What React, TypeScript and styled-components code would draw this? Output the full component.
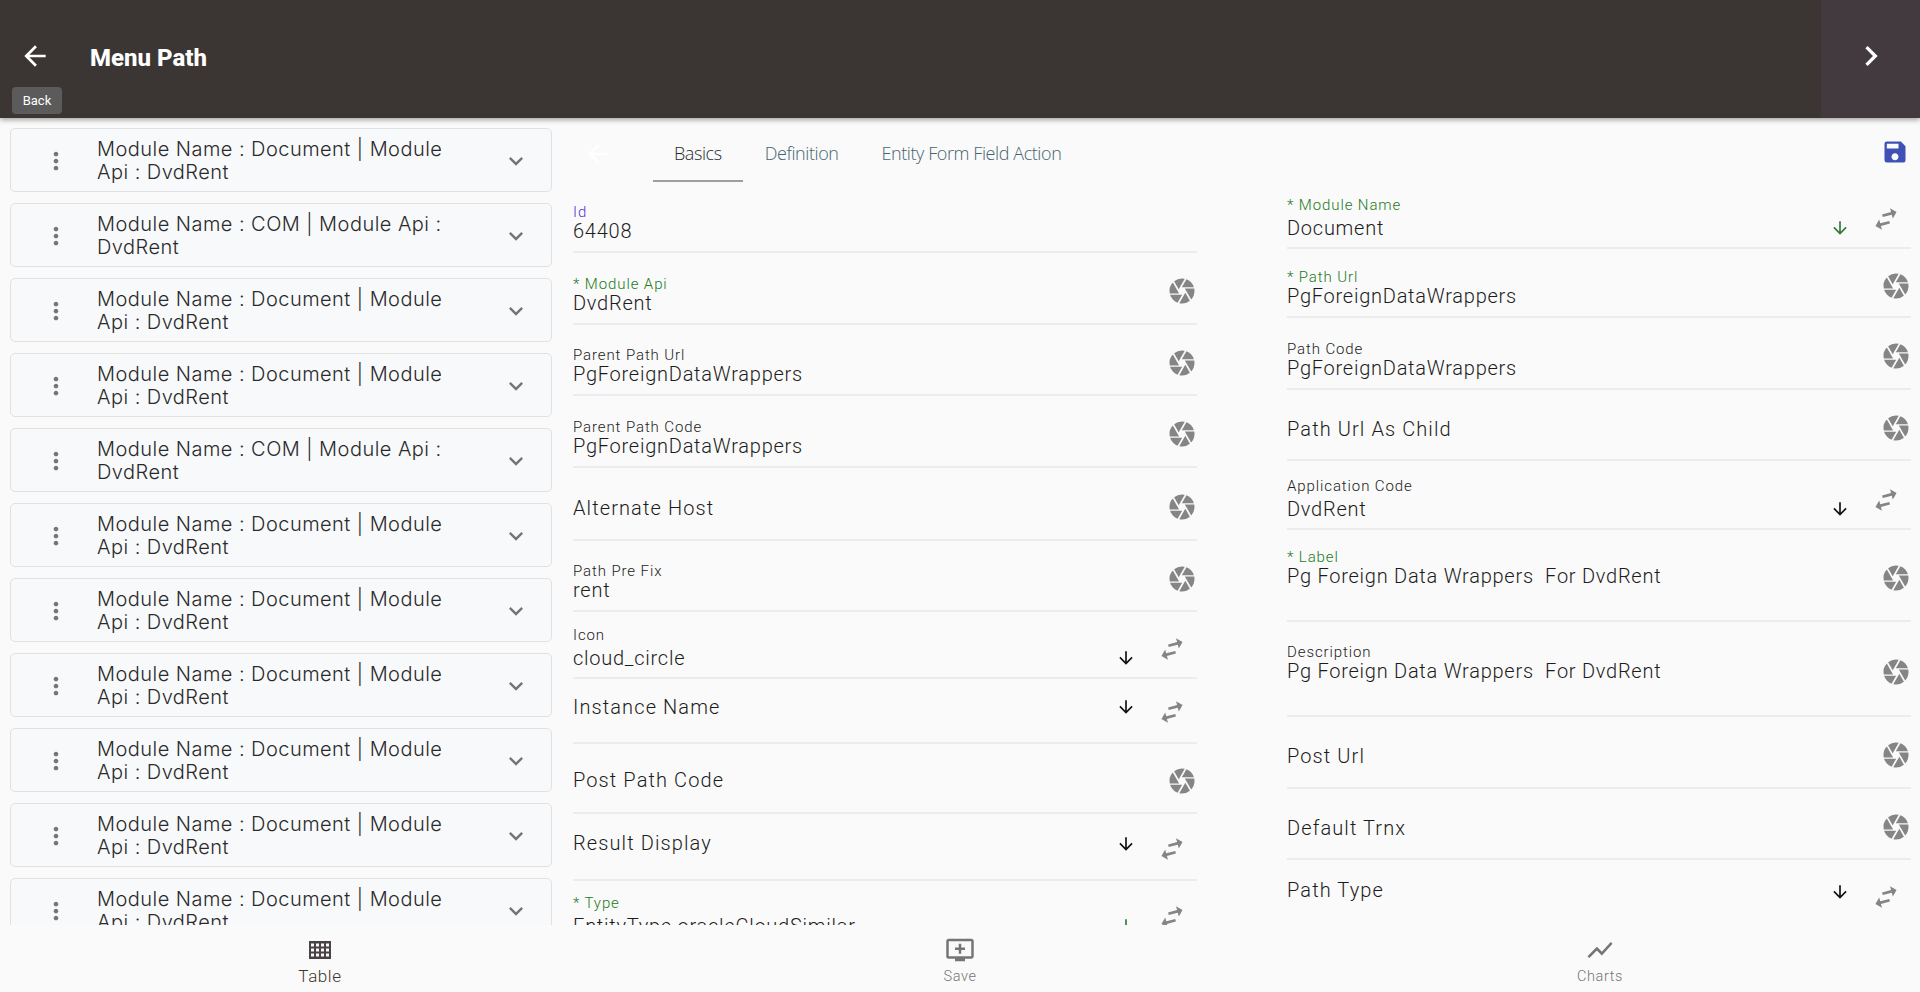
import styled, { createGlobalStyle } from "styled-components";
import {
  MdAddToQueue,
  MdArrowBack,
  MdArrowDownward,
  MdCamera,
  MdChevronRight,
  MdExpandMore,
  MdMoreVert,
  MdSave,
  MdShowChart,
  MdSwapHoriz,
} from "react-icons/md";

type Action = "camera" | "pick";
type Tone = "plain" | "id" | "required";

interface FieldData {
  label: string;
  value?: string;
  tone?: Tone;
  action: Action | "none";
  height: number;
  tall?: boolean;
  offset?: number;
}

const listItems = [
  "Module Name : Document | Module Api : DvdRent",
  "Module Name : COM | Module Api : DvdRent",
  "Module Name : Document | Module Api : DvdRent",
  "Module Name : Document | Module Api : DvdRent",
  "Module Name : COM | Module Api : DvdRent",
  "Module Name : Document | Module Api : DvdRent",
  "Module Name : Document | Module Api : DvdRent",
  "Module Name : Document | Module Api : DvdRent",
  "Module Name : Document | Module Api : DvdRent",
  "Module Name : Document | Module Api : DvdRent",
  "Module Name : Document | Module Api : DvdRent",
];

const leftFields: FieldData[] = [
  { label: "Id", value: "64408", tone: "id", action: "none", height: 63 },
  { label: "* Module Api", value: "DvdRent", tone: "required", action: "camera", height: 72 },
  { label: "Parent Path Url", value: "PgForeignDataWrappers", action: "camera", height: 71 },
  { label: "Parent Path Code", value: "PgForeignDataWrappers", action: "camera", height: 72 },
  { label: "Alternate Host", action: "camera", height: 73 },
  { label: "Path Pre Fix", value: "rent", action: "camera", height: 71 },
  { label: "Icon", value: "cloud_circle", action: "pick", height: 67 },
  { label: "Instance Name", action: "pick", height: 65 },
  { label: "Post Path Code", action: "camera", height: 70, offset: 2 },
  { label: "Result Display", action: "pick", height: 67 },
  { label: "* Type", value: "EntityType.oracleCloudSimilar", tone: "required", action: "pick", height: 66 },
];

const rightFields: FieldData[] = [
  { label: "* Module Name", value: "Document", tone: "required", action: "pick", height: 59 },
  { label: "* Path Url", value: "PgForeignDataWrappers", tone: "required", action: "camera", height: 69 },
  { label: "Path Code", value: "PgForeignDataWrappers", action: "camera", height: 72 },
  { label: "Path Url As Child", action: "camera", height: 71 },
  { label: "Application Code", value: "DvdRent", action: "pick", height: 69 },
  { label: "* Label", value: "Pg Foreign Data Wrappers  For DvdRent", tone: "required", action: "camera", height: 92, tall: true },
  { label: "Description", value: "Pg Foreign Data Wrappers  For DvdRent", action: "camera", height: 95, tall: true },
  { label: "Post Url", action: "camera", height: 72 },
  { label: "Default Trnx", action: "camera", height: 71 },
  { label: "Path Type", action: "pick", height: 69 },
];

const GlobalStyle = createGlobalStyle`
  html, body, #root {
    height: 100%;
    margin: 0;
  }
  body {
    overflow: hidden;
    background: #fafafa;
    font-family: Roboto, "Noto Sans", sans-serif;
  }
  svg {
    display: block;
  }
`;

const Page = styled.div`
  display: flex;
  flex-direction: column;
  height: 992px;
`;

const Header = styled.header`
  position: relative;
  z-index: 2;
  flex: 0 0 118px;
  display: flex;
  align-items: center;
  background: #3b3633;
  box-shadow: 0 2px 5px rgba(0, 0, 0, 0.35);
  color: #fff;
`;

const BackButton = styled.div`
  flex: 0 0 70px;
  display: flex;
  justify-content: center;
  font-size: 32px;
  padding-bottom: 6px;
`;

const Tooltip = styled.div`
  position: absolute;
  left: 12px;
  top: 87px;
  width: 50px;
  height: 27px;
  display: flex;
  align-items: center;
  justify-content: center;
  border-radius: 4px;
  background: #5b5b5b;
  font-size: 13px;
`;

const Title = styled.h1`
  flex: 1;
  margin: 0 0 0 20px;
  padding-bottom: 2px;
  font-size: 24px;
  font-weight: 800;
`;

const NextButton = styled.div`
  align-self: stretch;
  flex: 0 0 99px;
  display: flex;
  align-items: center;
  justify-content: center;
  background: #423a3f;
  font-size: 40px;
  padding-bottom: 6px;
  box-sizing: border-box;
`;

const Main = styled.main`
  flex: 1;
  min-height: 0;
  display: flex;
  overflow: hidden;
`;

const ListColumn = styled.div`
  flex: 0 0 552px;
  display: flex;
  flex-direction: column;
  gap: 11px;
  padding: 10px 0 0 10px;
  box-sizing: border-box;
`;

const ListCard = styled.div`
  flex: 0 0 64px;
  box-sizing: border-box;
  display: flex;
  align-items: center;
  border: 1px solid #dfe1e3;
  border-radius: 5px;
  background: #f8f9fb;
`;

const CardMenu = styled.div`
  flex: 0 0 86px;
  display: flex;
  justify-content: center;
  color: #757575;
  font-size: 28px;
  padding: 2px 0 0 4px;
  box-sizing: border-box;
`;

const CardText = styled.div`
  flex: 1;
  font-family: Inter, sans-serif;
  font-size: 20px;
  font-weight: 300;
  line-height: 23px;
  letter-spacing: 0.46px;
  color: #2a2a2a;
  padding: 1px 20px 0 0;
`;

const CardChevron = styled.div`
  flex: 0 0 70px;
  display: flex;
  justify-content: center;
  color: #757575;
  font-size: 28px;
  padding-top: 2px;
`;

const FormPanel = styled.div`
  flex: 1;
  min-width: 0;
  display: flex;
  flex-direction: column;
  padding-left: 21px;
`;

const TabBar = styled.div`
  flex: 0 0 72px;
  display: flex;
  align-items: flex-start;
  padding-right: 11px;
`;

const TabBack = styled.div`
  flex: 0 0 80px;
  box-sizing: border-box;
  padding: 21px 0 0 10px;
  color: #fff;
  font-size: 30px;
`;

const Tab = styled.div<{ $active?: boolean }>`
  box-sizing: border-box;
  height: 64px;
  padding: 23px 21px 0;
  margin-right: 1px;
  border-bottom: 2px solid ${({ $active }) => ($active ? "#9e9e9e" : "transparent")};
  font-family: "Open Sans", sans-serif;
  font-size: 18px;
  font-weight: 300;
  letter-spacing: -0.42px;
  color: ${({ $active }) => ($active ? "#1f2a30" : "#46646f")};
`;

const SaveAction = styled.div`
  margin-left: auto;
  padding-top: 20px;
  color: #3f51b5;
  font-size: 28px;
`;

const Columns = styled.div`
  display: grid;
  grid-template-columns: 624px 624px;
  column-gap: 90px;
`;

const FieldColumn = styled.div`
  display: flex;
  flex-direction: column;
`;

const FieldRow = styled.div<{ $height: number }>`
  box-sizing: border-box;
  flex: 0 0 ${({ $height }) => $height}px;
  display: flex;
  align-items: center;
  border-bottom: 2px solid #e9edf0;
`;

const FieldBody = styled.div<{ $picker?: boolean }>`
  flex: 1;
  min-width: 0;
  align-self: flex-end;
  padding-bottom: ${({ $picker }) => ($picker ? 8 : 9)}px;
`;

const FieldEmpty = styled.div<{ $shift: number }>`
  flex: 1;
  font-size: 20px;
  font-weight: 300;
  letter-spacing: 1.1px;
  color: #1c1c1c;
  transform: translateY(${({ $shift }) => $shift}px);
`;

const FieldLabel = styled.div<{ $tone: Tone }>`
  font-size: 15px;
  font-weight: 300;
  line-height: 16px;
  letter-spacing: 0.9px;
  color: ${({ $tone }) =>
    $tone === "id" ? "#5e2fd0" : $tone === "required" ? "#1b7a22" : "#222"};
`;

const FieldValue = styled.div<{ $tall?: boolean; $picker?: boolean }>`
  font-size: 20px;
  font-weight: 300;
  line-height: 22px;
  letter-spacing: 0.75px;
  white-space: pre;
  color: #1c1c1c;
  margin-top: ${({ $picker }) => ($picker ? 4 : 0)}px;
  margin-bottom: ${({ $tall }) => ($tall ? 24 : 0)}px;
`;

const CameraAction = styled.div`
  flex: 0 0 30px;
  color: #858585;
  font-size: 30px;
  transform: translateY(3px);
`;

const PickerActions = styled.div`
  flex: 0 0 81px;
  align-self: flex-end;
  display: flex;
  align-items: flex-end;
`;

const DownArrow = styled.div<{ $required?: boolean; $filled: boolean }>`
  flex: 0 0 40px;
  margin-bottom: ${({ $filled }) => ($filled ? 9 : 25)}px;
  color: ${({ $required }) => ($required ? "#2e7d32" : "#111")};
  font-size: 20px;
`;

const SwapArrow = styled.div<{ $filled: boolean }>`
  margin-bottom: ${({ $filled }) => ($filled ? 12 : 14)}px;
  color: #858585;
  font-size: 32px;
  transform: rotate(-15deg);
`;

const BottomBar = styled.nav`
  position: relative;
  z-index: 2;
  flex: 0 0 67px;
  display: grid;
  grid-template-columns: repeat(3, 1fr);
  background: #fafafa;
`;

const BottomItem = styled.div<{ $active?: boolean }>`
  display: flex;
  flex-direction: column;
  align-items: center;
  padding-top: 10px;
  color: ${({ $active }) => ($active ? "#3b3633" : "#757575")};
  font-size: 30px;
`;

const BottomLabel = styled.span<{ $active?: boolean }>`
  margin-top: ${({ $active }) => ($active ? 3 : 4)}px;
  font-size: ${({ $active }) => ($active ? 17 : 14.5)}px;
  font-weight: 300;
  letter-spacing: 0.6px;
  line-height: 16px;
`;

const TableIcon = () => (
  <svg width="30" height="30" viewBox="0 0 30 30" aria-hidden="true">
    <rect x="4" y="6" width="22" height="18" fill="#4a4346" />
    {[0, 1, 2].flatMap((row) =>
      [0, 1, 2, 3].map((col) => (
        <rect
          key={`${row}-${col}`}
          x={6 + col * 5}
          y={8.5 + row * 5}
          width="3"
          height="3"
          fill="#fafafa"
        />
      ))
    )}
  </svg>
);

const Field = ({ field }: { field: FieldData }) => {
  const tone = field.tone ?? "plain";
  const required = tone === "required";
  const filled = !!field.value;
  const picker = field.action === "pick";
  const emptyShift = field.offset ?? (picker ? -4 : 4);

  return (
    <FieldRow $height={field.height}>
      {field.value ? (
        <FieldBody $picker={picker}>
          <FieldLabel $tone={tone}>{field.label}</FieldLabel>
          <FieldValue $tall={field.tall} $picker={picker}>
            {field.value}
          </FieldValue>
        </FieldBody>
      ) : (
        <FieldEmpty $shift={emptyShift}>{field.label}</FieldEmpty>
      )}
      {field.action === "camera" && (
        <CameraAction>
          <MdCamera />
        </CameraAction>
      )}
      {picker && (
        <PickerActions>
          <DownArrow $required={required} $filled={filled}>
            <MdArrowDownward />
          </DownArrow>
          <SwapArrow $filled={filled}>
            <MdSwapHoriz />
          </SwapArrow>
        </PickerActions>
      )}
    </FieldRow>
  );
};

const App = () => {
  return (
    <Page>
      <GlobalStyle />
      <Header>
        <BackButton>
          <MdArrowBack />
        </BackButton>
        <Tooltip>Back</Tooltip>
        <Title>Menu Path</Title>
        <NextButton>
          <MdChevronRight />
        </NextButton>
      </Header>
      <Main>
        <ListColumn>
          {listItems.map((item, i) => (
            <ListCard key={i}>
              <CardMenu>
                <MdMoreVert />
              </CardMenu>
              <CardText>{item}</CardText>
              <CardChevron>
                <MdExpandMore />
              </CardChevron>
            </ListCard>
          ))}
        </ListColumn>
        <FormPanel>
          <TabBar>
            <TabBack>
              <MdArrowBack />
            </TabBack>
            <Tab $active>Basics</Tab>
            <Tab>Definition</Tab>
            <Tab>Entity Form Field Action</Tab>
            <SaveAction>
              <MdSave />
            </SaveAction>
          </TabBar>
          <Columns>
            <FieldColumn>
              {leftFields.map((f) => (
                <Field key={f.label} field={f} />
              ))}
            </FieldColumn>
            <FieldColumn>
              {rightFields.map((f) => (
                <Field key={f.label} field={f} />
              ))}
            </FieldColumn>
          </Columns>
        </FormPanel>
      </Main>
      <BottomBar>
        <BottomItem $active>
          <TableIcon />
          <BottomLabel $active>Table</BottomLabel>
        </BottomItem>
        <BottomItem>
          <MdAddToQueue />
          <BottomLabel>Save</BottomLabel>
        </BottomItem>
        <BottomItem>
          <MdShowChart />
          <BottomLabel>Charts</BottomLabel>
        </BottomItem>
      </BottomBar>
    </Page>
  );
};

export default App;
